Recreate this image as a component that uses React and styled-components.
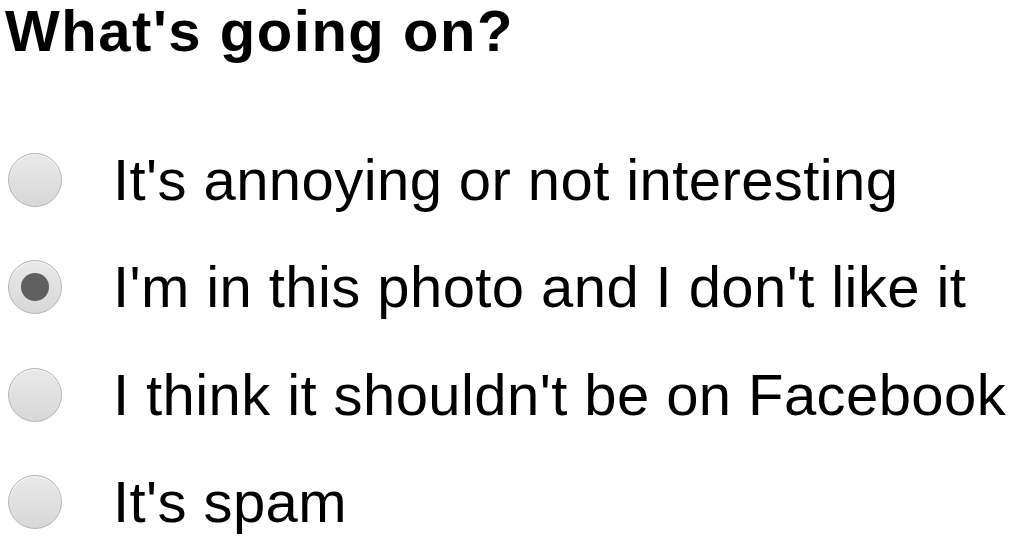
import React from "react";
import styled, { createGlobalStyle } from "styled-components";

const Global = createGlobalStyle`
  html, body { margin: 0; padding: 0; background: #fff; }
  body { font-family: "Liberation Sans", Arial, sans-serif; color: #000; overflow: hidden; }
`;

const Page = styled.div`
  width: 1014px;
  height: 539px;
  padding: 0 0 0 5px;
  box-sizing: border-box;
`;

const Title = styled.h1`
  margin: 0;
  font-size: 58px;
  font-weight: bold;
  line-height: 62px;
  letter-spacing: 1.55px;
`;

const List = styled.div`
  display: flex;
  flex-direction: column;
  margin-top: 64px;
`;

const Row = styled.label`
  display: flex;
  align-items: center;
  height: 107.5px;
  gap: 51px;
`;

const Radio = styled.span`
  flex: none;
  width: 52px;
  height: 52px;
  margin-left: 3px;
  border-radius: 50%;
  border: 1.5px solid #b4b4b4;
  background: linear-gradient(#e9e9e9, #d8d8d8);
  box-shadow: inset 0 1px 1px rgba(255,255,255,0.8);
  display: flex;
  align-items: center;
  justify-content: center;
`;

const Dot = styled.span`
  width: 28px;
  height: 28px;
  border-radius: 50%;
  background: #5f5f5f;
`;

const Label = styled.span`
  font-size: 58px;
  line-height: 1;
  letter-spacing: 0.42px;
  white-space: nowrap;
`;

const options = [
  "It's annoying or not interesting",
  "I'm in this photo and I don't like it",
  "I think it shouldn't be on Facebook",
  "It's spam",
];

export default function App() {
  const selected = 1;
  return (
    <Page>
      <Global />
      <Title>What's going on?</Title>
      <List>
        {options.map((o, i) => (
          <Row key={o}>
            <Radio>{i === selected && <Dot />}</Radio>
            <Label>{o}</Label>
          </Row>
        ))}
      </List>
    </Page>
  );
}
